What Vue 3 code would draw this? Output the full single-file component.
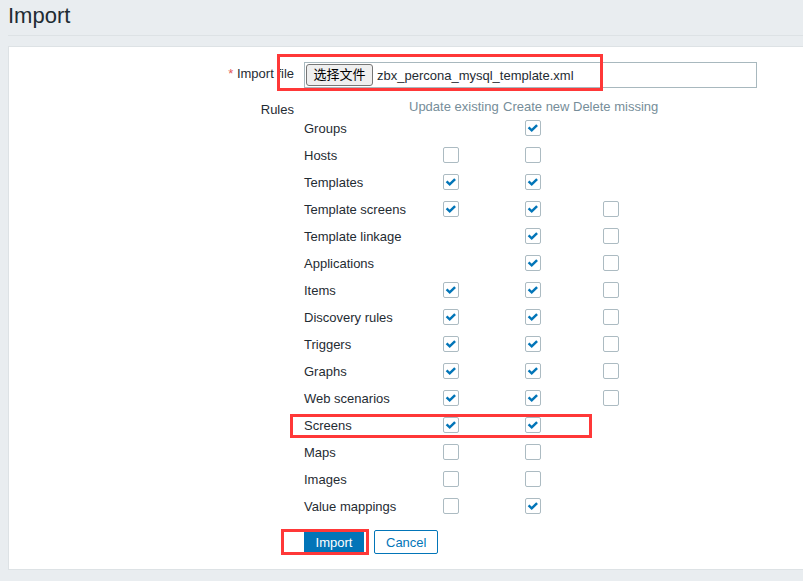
<script setup>
import { ref, reactive } from 'vue'

const columns = ['Update existing', 'Create new', 'Delete missing']

// One entry per column: true/false is the tick state, null means no such option.
const rules = reactive([
  { name: 'Groups', options: [null, true, null] },
  { name: 'Hosts', options: [false, false, null] },
  { name: 'Templates', options: [true, true, null] },
  { name: 'Template screens', options: [true, true, false] },
  { name: 'Template linkage', options: [null, true, false] },
  { name: 'Applications', options: [null, true, false] },
  { name: 'Items', options: [true, true, false] },
  { name: 'Discovery rules', options: [true, true, false] },
  { name: 'Triggers', options: [true, true, false] },
  { name: 'Graphs', options: [true, true, false] },
  { name: 'Web scenarios', options: [true, true, false] },
  { name: 'Screens', options: [true, true, null], marked: true },
  { name: 'Maps', options: [false, false, null] },
  { name: 'Images', options: [false, false, null] },
  { name: 'Value mappings', options: [false, true, null] }
])

const picker = ref(null)
const fileName = ref('zbx_percona_mysql_template.xml')

function onFile(event) {
  const file = event.target.files[0]
  if (file) fileName.value = file.name
}
</script>

<template>
  <main class="page">
    <header class="page-header">
      <h1>Import</h1>
    </header>

    <form class="card" @submit.prevent>
      <div class="form-row">
        <label class="form-label required" for="import-file">Import file</label>
        <div class="file-field">
          <input id="import-file" ref="picker" class="file-native" type="file" tabindex="-1" @change="onFile" />
          <button class="file-button" type="button" @click="picker.click()">选择文件</button>
          <span class="file-name">{{ fileName }}</span>
          <span class="mark mark-file"></span>
        </div>
      </div>

      <div class="form-row rules-row">
        <span id="rules-label" class="form-label">Rules</span>
        <table class="rules" aria-labelledby="rules-label">
          <colgroup>
            <col class="col-name" />
            <col class="col-update" />
            <col class="col-create" />
            <col class="col-delete" />
          </colgroup>
          <thead>
            <tr>
              <td></td>
              <th v-for="column in columns" :key="column" scope="col">{{ column }}</th>
            </tr>
          </thead>
          <tbody>
            <tr v-for="rule in rules" :key="rule.name">
              <th scope="row">
                <div class="rule-name">
                  {{ rule.name }}
                  <span v-if="rule.marked" class="mark mark-rule"></span>
                </div>
              </th>
              <td v-for="(option, i) in rule.options" :key="i">
                <label v-if="option !== null" class="check">
                  <input v-model="rule.options[i]" type="checkbox" :aria-label="`${rule.name}: ${columns[i]}`" />
                  <svg viewBox="0 0 16 16" aria-hidden="true">
                    <path d="M3.6 7.4 6.7 10.3 12.1 5.1" />
                  </svg>
                </label>
              </td>
            </tr>
          </tbody>
        </table>
      </div>

      <div class="actions">
        <div class="submit">
          <button class="button primary" type="submit">Import</button>
          <span class="mark mark-submit"></span>
        </div>
        <button class="button" type="button">Cancel</button>
      </div>
    </form>
  </main>
</template>

<style>
body {
  background: #e9edf0;
}
</style>

<style scoped>
.page {
  padding: 0 0 12px 8px;
  color: #1f2c33;
  font: 13px/16px "Liberation Sans", Arial, "Noto Sans CJK SC", sans-serif;
}

.page-header {
  padding: 4px 0 7px;
  border-bottom: 1px solid #dde2e5;
}

h1 {
  margin: 0;
  font-size: 22px;
  line-height: 24px;
  font-weight: 400;
}

.card {
  margin-top: 10px;
  padding: 15px 0;
  border: 1px solid #dde2e5;
  border-right: 0;
  background: #fff;
}

.form-row {
  display: flex;
  gap: 10px;
}

.form-label {
  flex: 0 0 285px;
  padding-top: 4px;
  text-align: right;
}

.required::before {
  content: "* ";
  color: #e45959;
}

.file-field {
  position: relative;
  display: flex;
  align-items: center;
  box-sizing: border-box;
  flex: 0 1 453px;
  height: 26px;
  padding: 1px;
  border: 1px solid #a8b8be;
}

.file-native {
  position: absolute;
  inset: 0;
  width: 100%;
  opacity: 0;
}

.file-button {
  position: relative;
  box-sizing: border-box;
  width: 67px;
  height: 22px;
  padding: 0;
  border: 1px solid #767676;
  border-radius: 3px;
  background: #efefef;
  color: #000;
  font: inherit;
}

.file-name {
  padding: 2px 0 0 4px;
}

.rules-row {
  margin-top: 10px;
}

.rules {
  border-collapse: collapse;
  table-layout: fixed;
  width: 355px;
}

.col-name {
  width: 105px;
}

.col-update {
  width: 94px;
}

.col-create {
  width: 70px;
}

.col-delete {
  width: 86px;
}

.rules th,
.rules td {
  padding: 0;
  font-weight: 400;
  text-align: left;
  white-space: nowrap;
}

.rules th {
  padding-top: 2px;
}

.rules thead th {
  color: #768d99;
  line-height: 14px;
}

.rules tbody tr {
  height: 27px;
}

.rules tbody td {
  padding-right: 10px;
  text-align: center;
}

.rule-name {
  position: relative;
}

.check {
  display: grid;
  justify-content: center;
}

.check input,
.check svg {
  grid-area: 1 / 1;
  box-sizing: border-box;
  width: 16px;
  height: 16px;
  margin: 0;
}

.check input {
  appearance: none;
  border: 1px solid #acbbc2;
  border-radius: 2px;
  background: #fff;
}

.check svg {
  visibility: hidden;
  fill: none;
  stroke: #0275b8;
  stroke-width: 2.5;
  pointer-events: none;
}

.check input:checked + svg {
  visibility: visible;
}

.actions {
  display: flex;
  gap: 10px;
  margin: 11px 0 0 295px;
}

.submit {
  position: relative;
}

.button {
  box-sizing: border-box;
  height: 24px;
  padding: 1px 11px 0;
  border: 1px solid #0275b8;
  border-radius: 2px;
  background: #fff;
  color: #0275b8;
  font: inherit;
}

.primary {
  width: 60px;
  padding: 1px 0 0;
  background: #0275b8;
  color: #fff;
}

.mark {
  position: absolute;
  border: 3px solid #ff3838;
  pointer-events: none;
}

.mark-file {
  inset: -9px 153px -4px -28px;
}

.mark-rule {
  top: -4px;
  left: -14px;
  width: 296px;
  height: 18px;
}

.mark-submit {
  inset: -1px -5px -1px -23px;
}
</style>
